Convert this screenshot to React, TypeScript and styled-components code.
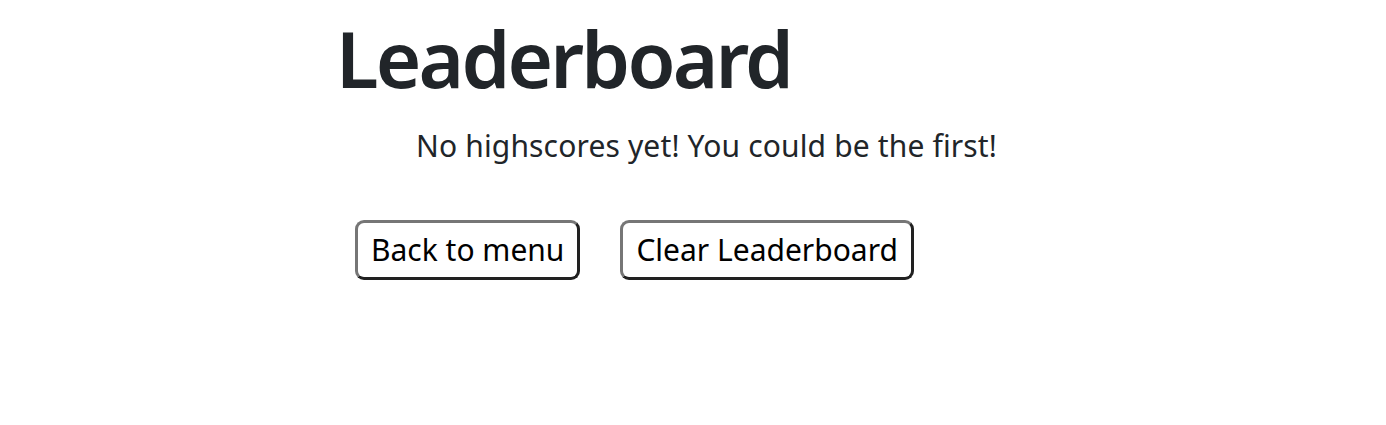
import React from "react";
import styled, { createGlobalStyle } from "styled-components";

const Global = createGlobalStyle`
  html, body { margin: 0; padding: 0; background: #fff; }
  body { font-family: "Noto Sans", "Open Sans", sans-serif; color: #212529; }
`;

const Page = styled.main`
  display: flex;
  flex-direction: column;
  align-items: flex-start;
  padding: 0 0 0 336px;
`;

const Title = styled.h1`
  margin: 12px 0 0 0;
  font-size: 78px;
  font-weight: 600;
  letter-spacing: -2.8px;
  line-height: 1.2;
  color: #212529;
`;

const Message = styled.p`
  margin: 22px 0 0 80px;
  font-size: 30px;
  letter-spacing: 0.15px;
  line-height: 1.2;
`;

const Actions = styled.div`
  display: flex;
  gap: 40px;
  margin: 56px 0 0 19px;
`;

const Button = styled.button`
  font-family: inherit;
  font-size: 30px;
  color: #000;
  background: #fff;
  border: 3px outset #767676;
  border-radius: 9px;
  padding: 9px 13px;
  line-height: 1.2;
  cursor: pointer;
`;

export default function App() {
  return (
    <>
      <Global />
      <Page>
        <Title>Leaderboard</Title>
        <Message>No highscores yet! You could be the first!</Message>
        <Actions>
          <Button>Back to menu</Button>
          <Button>Clear Leaderboard</Button>
        </Actions>
      </Page>
    </>
  );
}
